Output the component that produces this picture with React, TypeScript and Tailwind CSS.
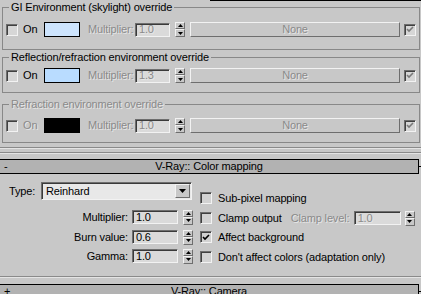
import React from 'react';

const sunken = 'border border-t-[#6e6e6e] border-l-[#6e6e6e] border-b-[#f2f2f2] border-r-[#f2f2f2]';
const raised = 'border border-t-[#f2f2f2] border-l-[#f2f2f2] border-b-[#6e6e6e] border-r-[#6e6e6e]';
const dim = 'text-[#8a8a8a] [text-shadow:1px_1px_0_#e6e6e6]';

function Check({ checked = false, disabled = false }: { checked?: boolean; disabled?: boolean }) {
  return (
    <div className={`flex h-[12px] w-[12px] shrink-0 items-center justify-center ${sunken} ${disabled ? 'bg-[#d6d6d6]' : 'bg-[#d2d2d2]'} shadow-[inset_1px_1px_0_#404040]`}>
      {checked && (
        <svg width="8" height="7" viewBox="0 0 8 7">
          <path d="M1 3 L3 5 L7 1" stroke={disabled ? '#7a7a7a' : '#000'} strokeWidth="1.6" fill="none" />
        </svg>
      )}
    </div>
  );
}

function Spinner() {
  return (
    <div className="flex h-[15px] w-[10px] shrink-0 flex-col">
      <div className={`flex h-[7px] items-center justify-center bg-[#c8c8c8] ${raised}`}>
        <svg width="5" height="3" viewBox="0 0 5 3">
          <path d="M2.5 0 L5 3 L0 3Z" fill="#000" />
        </svg>
      </div>
      <div className={`flex h-[8px] items-center justify-center bg-[#c8c8c8] ${raised}`}>
        <svg width="5" height="3" viewBox="0 0 5 3">
          <path d="M0 0 L5 0 L2.5 3Z" fill="#000" />
        </svg>
      </div>
    </div>
  );
}

function Field({ value, w, disabled = false }: { value: string; w: string; disabled?: boolean }) {
  return (
    <div className={`flex h-[14px] shrink-0 items-center pl-[3px] leading-none ${w} ${sunken} bg-[#dadada] shadow-[inset_1px_1px_0_#3a3a3a] ${disabled ? dim : 'text-black'}`}>
      {value}
    </div>
  );
}

function EnvGroup({
  title,
  swatch,
  mult,
  disabled = false,
  className,
}: {
  title: string;
  swatch: string;
  mult: string;
  disabled?: boolean;
  className: string;
}) {
  return (
    <fieldset className={`ml-[2px] w-[418px] border border-[#888888] pl-[3px] ${className}`}>
      <legend className={`ml-[3px] px-[2px] leading-[13px] ${disabled ? dim : 'text-black'}`}>{title}</legend>
      <div className="flex h-[15px] items-center">
        <Check disabled />
        <span className={`ml-[5px] w-[21px] ${disabled ? dim : 'text-black'}`}>On</span>
        <div className={`h-[15px] w-[36px] border border-black ${swatch}`} />
        <span className={`ml-[8px] w-[47px] ${dim}`}>Multiplier:</span>
        <Field value={mult} w="w-[35px]" disabled />
        <div className="ml-[5px]">
          <Spinner />
        </div>
        <div className={`ml-[5px] flex h-[15px] w-[210px] items-center justify-center bg-[#c8c8c8] ${raised} ${dim}`}>
          None
        </div>
        <div className="ml-[4px]">
          <Check checked disabled />
        </div>
      </div>
    </fieldset>
  );
}

function RolloutHeader({ sign, title }: { sign: string; title: string }) {
  return (
    <div className="flex items-center">
      <div className="relative flex h-[15px] w-[419px] items-center justify-center border-y border-r border-black bg-[#b2b2b2] text-black">
        <span className="absolute left-[4px] top-[-1px] leading-[15px]">{sign}</span>
        <span className="leading-none">{title}</span>
      </div>
      <div className="h-px w-[2px] bg-black" />
    </div>
  );
}

function SpinRow({ label, value, className }: { label: string; value: string; className: string }) {
  return (
    <div className={`flex h-[14px] items-center ${className}`}>
      <span className="w-[128px] text-right">{label}</span>
      <div className="ml-[4px]">
        <Field value={value} w="w-[46px]" />
      </div>
      <div className="ml-[5px]">
        <Spinner />
      </div>
    </div>
  );
}

function CheckRow({ label, checked = false, className, children }: { label: string; checked?: boolean; className: string; children?: React.ReactNode }) {
  return (
    <div className={`flex h-[14px] items-center ${className}`}>
      <Check checked={checked} />
      <span className="ml-[6px] whitespace-nowrap">{label}</span>
      {children}
    </div>
  );
}

export default function App() {
  return (
    <div className="h-[294px] w-[421px] overflow-hidden bg-[#c8c8c8] font-['Liberation_Sans',Arial,sans-serif] text-[11px] tracking-[-0.15px] text-black">
      {/* top edge */}
      <div className="ml-[210px] h-px bg-black" />

      <EnvGroup title="GI Environment (skylight) override" swatch="bg-[#cde4fd]" mult="1.0" className="pt-[8px] pb-[12px]" />
      <EnvGroup title="Reflection/refraction environment override" swatch="bg-[#b9dcff]" mult="1.3" className="mt-[1px] pt-[4px] pb-[9px]" />
      <EnvGroup title="Refraction environment override" swatch="bg-black" mult="1.0" disabled className="mt-[5px] pt-[7px] pb-[9px]" />

      {/* panel bottom edge */}
      <div className="mt-[4px] h-px bg-[#8a8a8a]" />
      <div className="h-px bg-[#e4e4e4]" />
      <div className="mt-[3px] h-px bg-[#8a8a8a]" />
      <div className="h-px bg-[#e4e4e4]" />

      <div className="mt-[5px]">
        <RolloutHeader sign="-" title="V-Ray:: Color mapping" />
      </div>

      {/* Color mapping body */}
      <div className="flex h-[102px]">
        <div className="w-[200px]">
          <div className="mt-[8px] flex h-[18px] items-center">
            <span className="ml-[9px] w-[32px]">Type:</span>
            <div className={`flex h-[18px] w-[151px] items-center justify-between bg-[#e8e8e8] ${sunken} shadow-[inset_1px_1px_0_#3a3a3a]`}>
              <span className="ml-[4px]">Reinhard</span>
              <div className={`mr-px flex h-[14px] w-[15px] items-center justify-center bg-[#c8c8c8] ${raised}`}>
                <svg width="7" height="4" viewBox="0 0 7 4">
                  <path d="M0 0 L7 0 L3.5 4Z" fill="#000" />
                </svg>
              </div>
            </div>
          </div>
          <SpinRow label="Multiplier:" value="1.0" className="mt-[10px]" />
          <SpinRow label="Burn value:" value="0.6" className="mt-[6px]" />
          <SpinRow label="Gamma:" value="1.0" className="mt-[5px]" />
        </div>
        <div className="flex-1">
          <CheckRow label="Sub-pixel mapping" className="mt-[17px]" />
          <CheckRow label="Clamp output" className="mt-[6px]">
            <span className={`ml-[9px] w-[63px] ${dim}`}>Clamp level:</span>
            <Field value="1.0" w="w-[47px]" disabled />
            <div className="ml-[4px]">
              <Spinner />
            </div>
          </CheckRow>
          <CheckRow label="Affect background" checked className="mt-[5px]" />
          <CheckRow label="Don't affect colors (adaptation only)" className="mt-[6px]" />
        </div>
      </div>

      <div className="h-px bg-[#8a8a8a]" />
      <div className="h-px bg-[#e4e4e4]" />

      <div className="mt-[6px]">
        <RolloutHeader sign="+" title="V-Ray:: Camera" />
      </div>
    </div>
  );
}
